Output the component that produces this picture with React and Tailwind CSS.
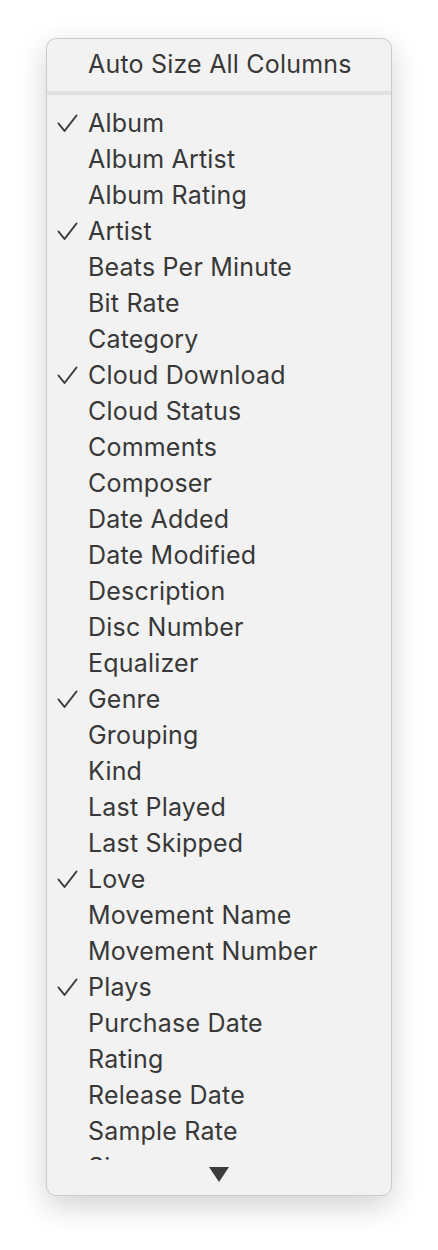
import React from "react";

const columns = [
  ["Album", true],
  ["Album Artist", false],
  ["Album Rating", false],
  ["Artist", true],
  ["Beats Per Minute", false],
  ["Bit Rate", false],
  ["Category", false],
  ["Cloud Download", true],
  ["Cloud Status", false],
  ["Comments", false],
  ["Composer", false],
  ["Date Added", false],
  ["Date Modified", false],
  ["Description", false],
  ["Disc Number", false],
  ["Equalizer", false],
  ["Genre", true],
  ["Grouping", false],
  ["Kind", false],
  ["Last Played", false],
  ["Last Skipped", false],
  ["Love", true],
  ["Movement Name", false],
  ["Movement Number", false],
  ["Plays", true],
  ["Purchase Date", false],
  ["Rating", false],
  ["Release Date", false],
  ["Sample Rate", false],
  ["Size", false],
  ["Skip Count", false],
];

const Check = () => (
  <svg width="21" height="19" viewBox="0 0 21 19" className="absolute left-[10px] top-[9px]">
    <path d="M1.5 9.5 L7.5 17 L19.5 1.5" fill="none" stroke="#3a3a3a" strokeWidth="2" strokeLinecap="round" strokeLinejoin="round" />
  </svg>
);

const Row = ({ label, checked }) => (
  <div className="relative h-[36px] flex items-center pl-[41px] pt-[2px] shrink-0">
    {checked && <Check />}
    <span>{label}</span>
  </div>
);

export default function App() {
  return (
    <div className="w-[438px] h-[1250px] bg-white pt-[38px] pl-[46px]">
      <div
        className="w-[346px] h-[1158px] bg-[#f2f2f2] rounded-[10px] border border-[#c9c9c9] shadow-[0_10px_30px_rgba(0,0,0,0.18)] overflow-hidden flex flex-col pt-[7px] text-[25px] text-[#383838] tracking-[0.2px]"
        style={{ fontFamily: "Inter, 'Noto Sans', sans-serif" }}
      >
        <Row label="Auto Size All Columns" />
        <div className="h-[23px] shrink-0 pt-[9px]">
          <div className="h-[4px] bg-[#e1e1e1]" />
        </div>
        <div className="h-[1055px] overflow-hidden flex flex-col shrink-0">
          {columns.map(([label, checked]) => (
            <Row key={label} label={label} checked={checked} />
          ))}
        </div>
        <div className="h-[28px] flex items-center justify-center shrink-0">
          <svg width="20" height="15" viewBox="0 0 20 15">
            <path d="M0 0 H20 L10 15 Z" fill="#3c3c3c" />
          </svg>
        </div>
      </div>
    </div>
  );
}
